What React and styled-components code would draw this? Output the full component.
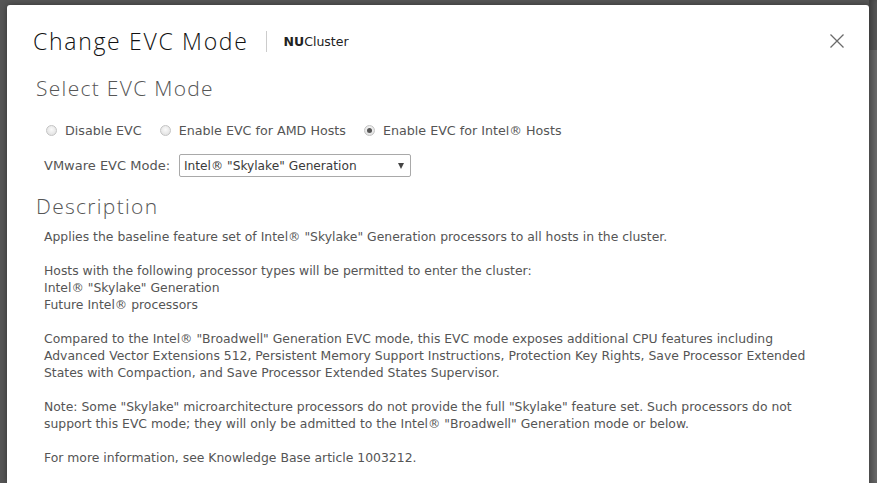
import React from 'react';
import styled, { createGlobalStyle } from 'styled-components';

const Global = createGlobalStyle`
  html, body {
    margin: 0;
    padding: 0;
    background: #565656;
    overflow: hidden;
  }
  #root {
    height: 483px;
  }
`;

const Page = styled.div`
  display: flex;
  flex-direction: row;
  height: 483px;
  padding-top: 5px;
  box-sizing: border-box;
  background: #565656;
`;

const Gutter = styled.div`
  width: 7px;
  flex-shrink: 0;
`;

const BackStrip = styled.div`
  flex: 1;
  margin-top: -5px;
  background: linear-gradient(to bottom, #575757 0, #575757 50px, #6a6a6a 50px, #6a6a6a 100%);
  box-shadow: inset 6px 0 6px -3px rgba(0, 0, 0, 0.35);
`;

const Modal = styled.div`
  width: 862px;
  flex-shrink: 0;
  background: #ffffff;
  border-radius: 3px 3px 0 0;
  box-shadow: 0 0 6px rgba(0, 0, 0, 0.4);
  font-family: 'DejaVu Sans', Verdana, sans-serif;
  color: #555;
  display: flex;
  flex-direction: column;
`;

const Header = styled.div`
  display: flex;
  flex-direction: row;
  align-items: center;
  padding: 20px 24px 0 26px;
  height: 32px;
`;

const Title = styled.h1`
  margin: 0;
  font-family: 'Open Sans', sans-serif;
  font-weight: 300;
  font-size: 23px;
  letter-spacing: 1.7px;
  line-height: 32px;
  color: #111;
`;

const Divider = styled.span`
  width: 1px;
  height: 21px;
  background: #ccc;
  margin: 0 17px 0 17px;
`;

const Subtitle = styled.span`
  font-size: 12.5px;
  color: #222;
  b {
    font-weight: 700;
  }
`;

const CloseButton = styled.button`
  margin-left: auto;
  border: 0;
  background: none;
  padding: 0;
  width: 16px;
  height: 16px;
  display: flex;
  cursor: pointer;
`;

const Body = styled.div`
  padding: 0 40px 0 29px;
  display: flex;
  flex-direction: column;
`;

const Section = styled.h2`
  margin: 0;
  font-family: 'Open Sans', sans-serif;
  font-weight: 300;
  font-size: 21px;
  letter-spacing: 1.3px;
  line-height: 28px;
  color: #565656;
  margin-top: ${(p) => p.$top}px;
`;

const RadioRow = styled.div`
  display: flex;
  flex-direction: row;
  align-items: center;
  gap: 18px;
  padding-left: 10px;
  margin-top: 21px;
  height: 14px;
`;

const RadioLabel = styled.label`
  display: flex;
  align-items: center;
  gap: 8px;
  font-size: 12.7px;
  color: #555;
`;

const Dot = styled.span`
  width: 11px;
  height: 11px;
  border-radius: 50%;
  box-sizing: border-box;
  border: 1px solid #c4c4c4;
  background: radial-gradient(circle at 50% 40%, #fafafa, #dcdcdc);
  display: flex;
  align-items: center;
  justify-content: center;
  &::after {
    content: '';
    width: 5px;
    height: 5px;
    border-radius: 50%;
    background: #555;
    display: ${(p) => (p.$on ? 'block' : 'none')};
  }
`;

const ModeRow = styled.div`
  display: flex;
  flex-direction: row;
  align-items: center;
  gap: 9px;
  padding-left: 8px;
  margin-top: 17px;
`;

const ModeLabel = styled.span`
  font-size: 13px;
  color: #555;
`;

const Select = styled.div`
  width: 232px;
  height: 23px;
  box-sizing: border-box;
  border: 1px solid #a9a9a9;
  border-radius: 2px;
  display: flex;
  align-items: center;
  justify-content: space-between;
  padding: 0 6px 0 4px;
  font-size: 12.2px;
  color: #3a3a3a;
`;

const Arrow = styled.span`
  width: 0;
  height: 0;
  border-left: 3.5px solid transparent;
  border-right: 3.5px solid transparent;
  border-top: 6px solid #444;
`;

const Text = styled.div`
  padding-left: 8px;
  margin-top: 8px;
  font-size: 12.4px;
  line-height: 17px;
  color: #555;
  p {
    margin: 0 0 17px 0;
  }
`;

export default function App() {
  return (
    <>
      <Global />
      <Page>
        <Gutter />
        <Modal>
          <Header>
            <Title>Change EVC Mode</Title>
            <Divider />
            <Subtitle>
              <b>NU</b>Cluster
            </Subtitle>
            <CloseButton aria-label="Close">
              <svg width="16" height="16" viewBox="0 0 16 16">
                <path d="M1.5 1.5 L14.5 14.5 M14.5 1.5 L1.5 14.5" stroke="#6a6a6a" strokeWidth="1.3" fill="none" />
              </svg>
            </CloseButton>
          </Header>
          <Body>
            <Section $top={17}>Select EVC Mode</Section>
            <RadioRow>
              <RadioLabel>
                <Dot />
                Disable EVC
              </RadioLabel>
              <RadioLabel>
                <Dot />
                Enable EVC for AMD Hosts
              </RadioLabel>
              <RadioLabel>
                <Dot $on />
                Enable EVC for Intel® Hosts
              </RadioLabel>
            </RadioRow>
            <ModeRow>
              <ModeLabel>VMware EVC Mode:</ModeLabel>
              <Select>
                Intel® "Skylake" Generation
                <Arrow />
              </Select>
            </ModeRow>
            <Section $top={15}>Description</Section>
            <Text>
              <p>Applies the baseline feature set of Intel® "Skylake" Generation processors to all hosts in the cluster.</p>
              <p>
                Hosts with the following processor types will be permitted to enter the cluster:
                <br />
                Intel® "Skylake" Generation
                <br />
                Future Intel® processors
              </p>
              <p>
                Compared to the Intel® "Broadwell" Generation EVC mode, this EVC mode exposes additional CPU features
                including Advanced Vector Extensions 512, Persistent Memory Support Instructions, Protection Key Rights,
                Save Processor Extended States with Compaction, and Save Processor Extended States Supervisor.
              </p>
              <p>
                Note: Some "Skylake" microarchitecture processors do not provide the full "Skylake" feature set. Such
                processors do not support this EVC mode; they will only be admitted to the Intel® "Broadwell" Generation
                mode or below.
              </p>
              <p>For more information, see Knowledge Base article 1003212.</p>
            </Text>
          </Body>
        </Modal>
        <BackStrip />
      </Page>
    </>
  );
}
